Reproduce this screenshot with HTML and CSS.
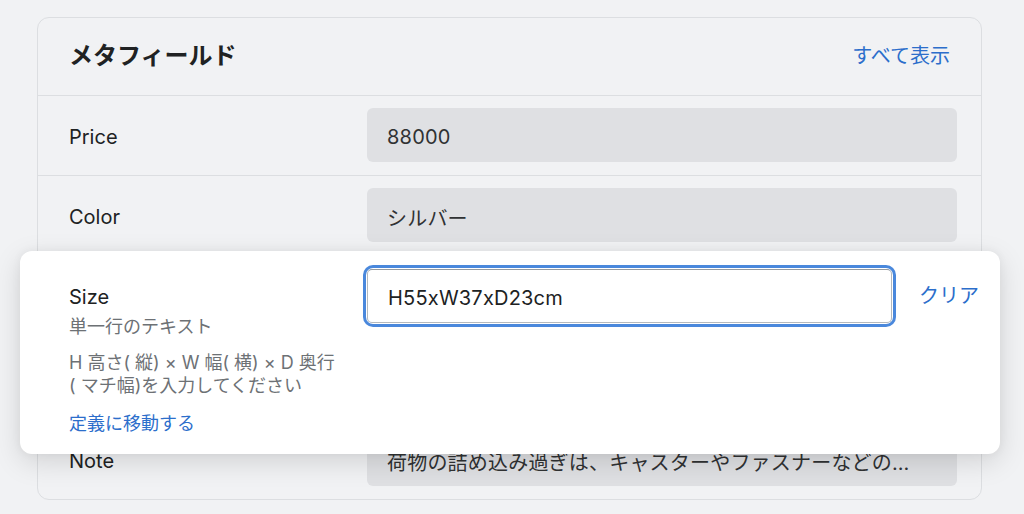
FILE: index.html
```html
<!DOCTYPE html>
<html lang="ja">
<head>
<meta charset="utf-8">
<title>メタフィールド</title>
<link rel="stylesheet" href="styles.css">
</head>
<body>
<section class="card">
  <header class="card-header">
    <h2 class="card-title">メタフィールド</h2>
    <a class="link" href="#">すべて表示</a>
  </header>
  <div class="row">
    <div class="row-label">Price</div>
    <input class="field field-disabled" type="text" value="88000" disabled>
  </div>
  <div class="row">
    <div class="row-label">Color</div>
    <input class="field field-disabled" type="text" value="シルバー" disabled>
  </div>
  <div class="editor">
    <div class="editor-info">
      <div class="editor-name">Size</div>
      <div class="editor-type">単一行のテキスト</div>
      <p class="editor-help">H 高さ( 縦) × W 幅( 横) × D 奥行 ( マチ幅)を入力してください</p>
      <a class="link link-small" href="#">定義に移動する</a>
    </div>
    <div class="focus-ring">
      <input class="field field-active" type="text" value="H55xW37xD23cm">
    </div>
    <a class="link editor-clear" href="#">クリア</a>
  </div>
  <div class="row row-last">
    <div class="row-label">Note</div>
    <input class="field field-disabled field-long" type="text" value="荷物の詰め込み過ぎは、キャスターやファスナーなどの破損の原因になります" disabled>
  </div>
</section>
</body>
</html>
```
FILE: styles.css
```css
* { box-sizing: border-box; }

html, body {
  margin: 0;
  padding: 0;
}

body {
  background: #f1f2f4;
  color: #202223;
  font-family: Inter, "Noto Sans CJK JP", sans-serif;
  width: 1024px;
  height: 514px;
  overflow: hidden;
}

.card {
  margin: 17px 0 0 37px;
  width: 945px;
  border: 1px solid #dcdee1;
  border-radius: 12px;
  background: #f1f2f4;
}

.card-header {
  height: 78px;
  padding: 0 31px 2px 31px;
  display: flex;
  align-items: center;
  justify-content: space-between;
  border-bottom: 1px solid #dcdee1;
}

.card-title {
  margin: 0 0 4px 0;
  font-family: "Noto Sans CJK JP", sans-serif;
  font-size: 24px;
  font-weight: 700;
  line-height: 30px;
  color: #202223;
}

.link {
  color: #2c6ecb;
  text-decoration: none;
  font-family: Inter, "Noto Sans CJK JP", sans-serif;
  font-size: 20px;
  line-height: 28px;
  white-space: nowrap;
}

.row {
  display: grid;
  grid-template-columns: 298px 1fr;
  align-items: center;
  padding: 12px 24px 13px 31px;
  border-bottom: 1px solid #dcdee1;
}

.row-last {
  border-bottom: none;
}

.row-label {
  padding-top: 4px;
  font-size: 20px;
  line-height: 28px;
  color: #202223;
}

.field {
  display: block;
  width: 100%;
  height: 54px;
  margin: 0;
  padding: 4px 20px 0 20px;
  font-family: Inter, "Noto Sans CJK JP", sans-serif;
  font-size: 20px;
  letter-spacing: 0.2px;
  color: #202223;
  outline: none;
}

.field-disabled {
  background: #dfe0e3;
  border: none;
  border-radius: 6px;
  opacity: 1;
  -webkit-text-fill-color: #303233;
  text-overflow: ellipsis;
}

.field-long {
  padding-right: 34px;
}

.editor {
  position: relative;
  z-index: 2;
  margin: -5px -19px -34px -18px;
  padding: 18px 20px 18px 49px;
  background: #ffffff;
  border-radius: 12px;
  box-shadow: 0 8px 28px rgba(0, 0, 0, 0.13), 0 0 10px rgba(0, 0, 0, 0.05);
  display: grid;
  grid-template-columns: 271px 525px auto;
  column-gap: 27px;
  align-items: start;
}

.editor-info {
  padding-top: 15px;
}

.editor-name {
  font-size: 20px;
  line-height: 26px;
  color: #202223;
}

.editor-type {
  margin-top: 5px;
  font-size: 18px;
  line-height: 24px;
  color: #6d7175;
}

.editor-help {
  margin: 12px 0 0 0;
  width: 276px;
  font-size: 18px;
  line-height: 23px;
  color: #6d7175;
}

.link-small {
  display: inline-block;
  margin-top: 15px;
  font-size: 18px;
  line-height: 24px;
}

.focus-ring {
  position: relative;
  border-radius: 6px;
  box-shadow: 0 0 0 1px #ffffff, 0 0 0 4px #4a88dc;
}

.field-active {
  background: #ffffff;
  border: 1px solid #b5b9bd;
  border-top-color: #959a9f;
  border-radius: 5px;
}

.editor-clear {
  padding-top: 13px;
  padding-left: 0;
}
```
